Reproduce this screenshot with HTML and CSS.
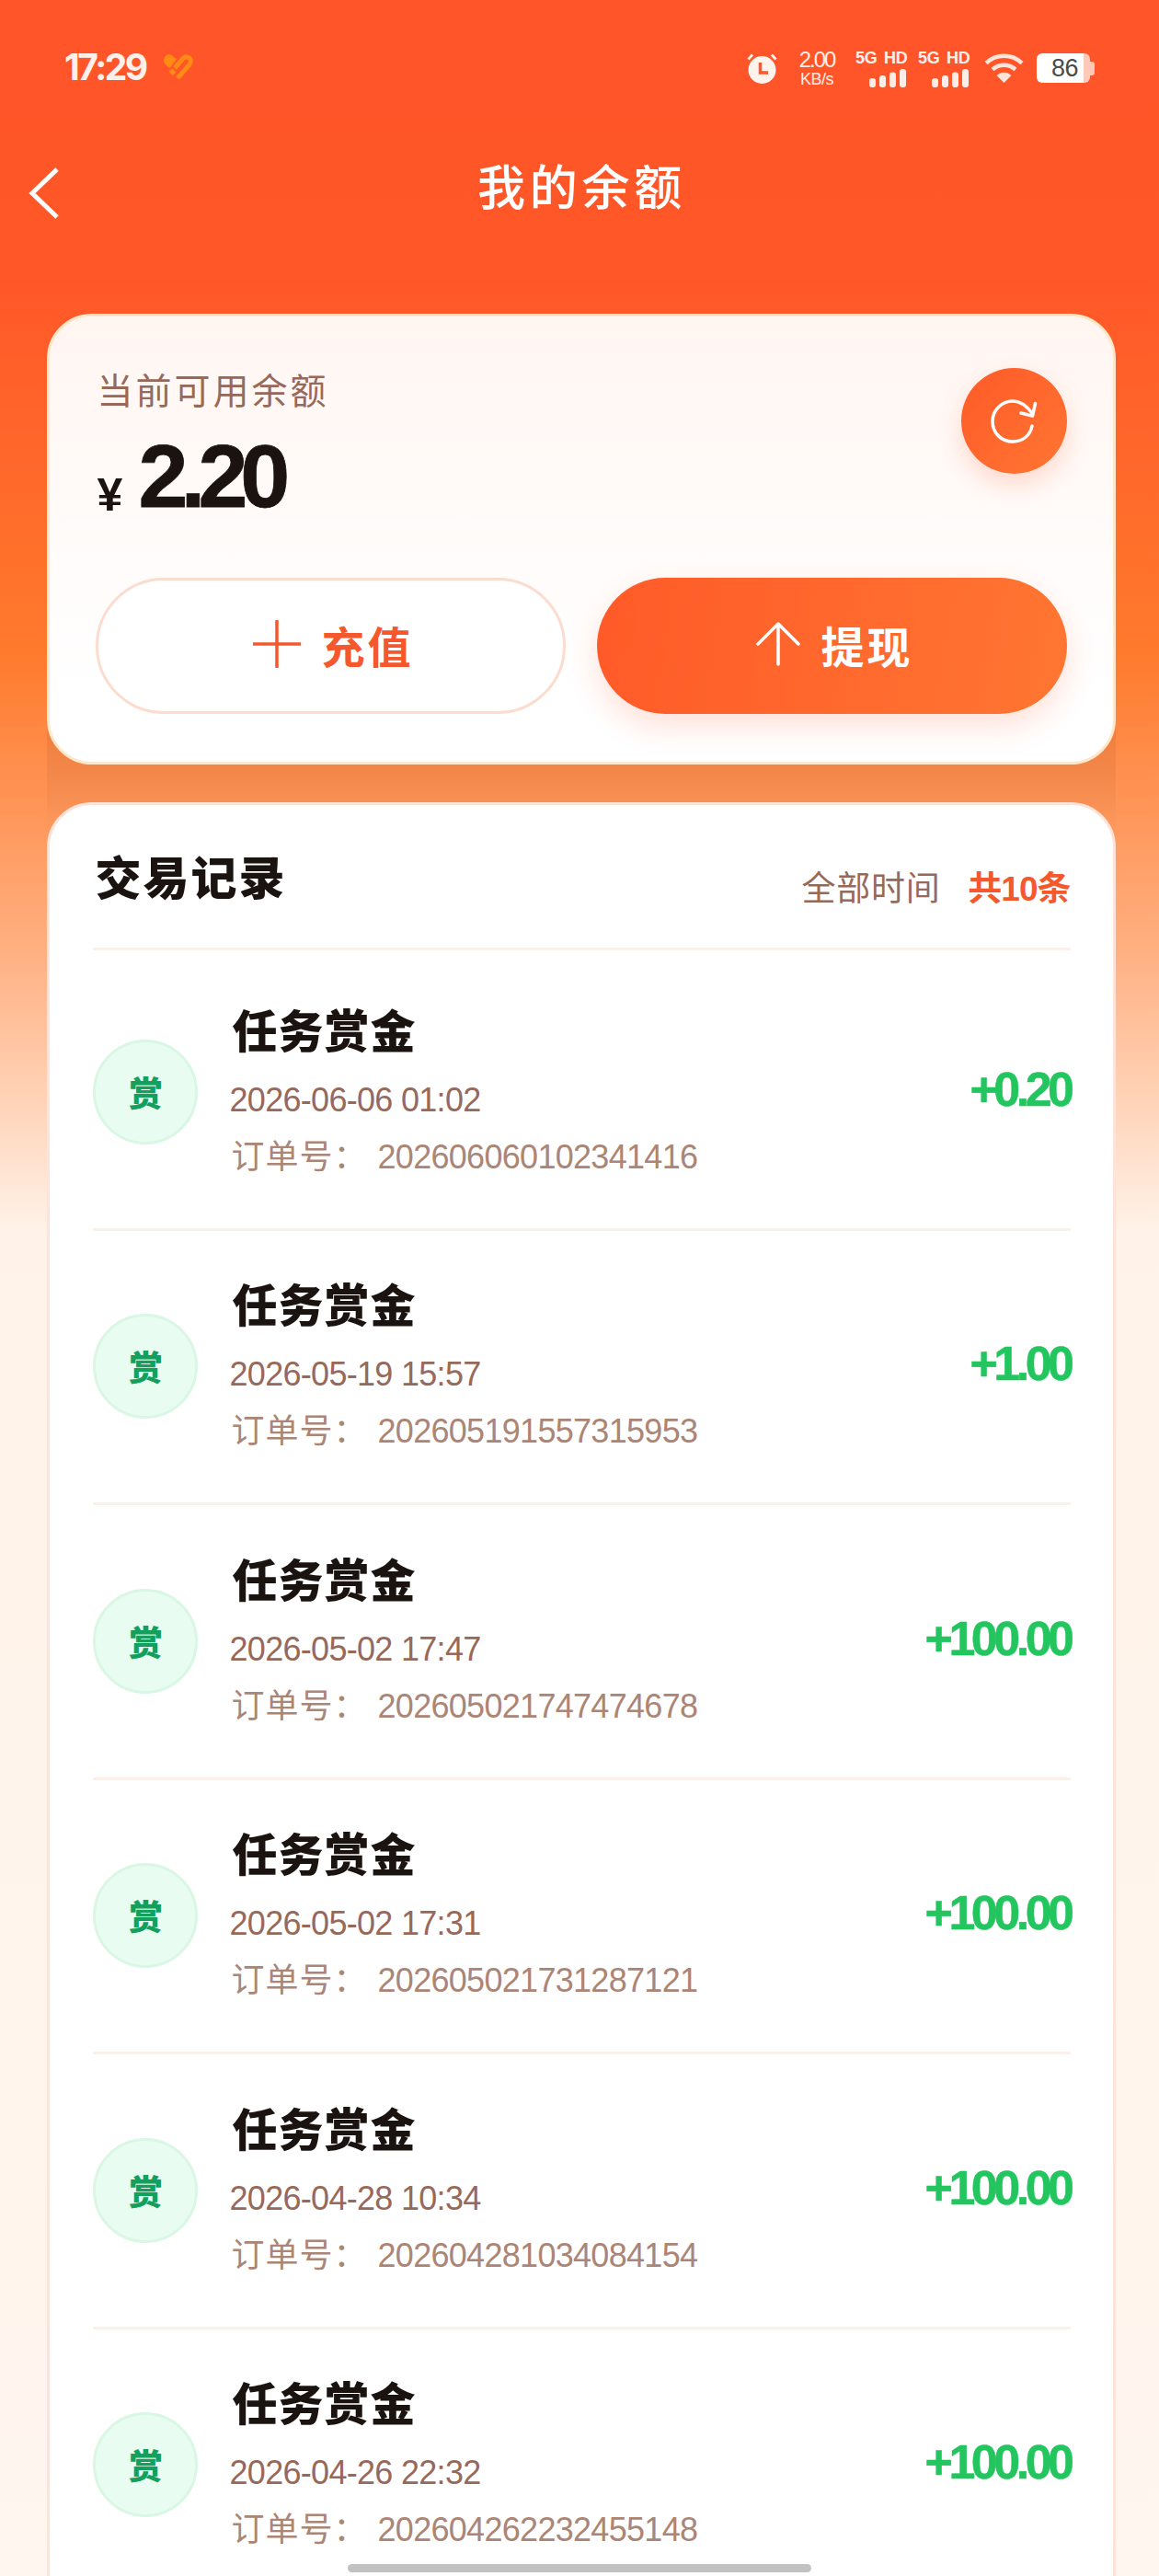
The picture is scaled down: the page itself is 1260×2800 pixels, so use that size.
FILE: index.html
```html
<!DOCTYPE html>
<html lang="zh-CN">
<head>
<meta charset="utf-8">
<title>我的余额</title>
<link rel="stylesheet" href="styles.css">
</head>
<body>
<div class="page">
  <div class="status">
    <div class="status-left">
      <span class="time">17:29</span>
      <svg class="heart" viewBox="0 0 34 28" aria-hidden="true"><path d="M1 7.500C1 3 6 0 9.500 2L15 6.500L7.500 16C3.500 13 1 11 1 7.500Z" fill="#ff8a14"/><path d="M13 16L22 5.500C25 2.500 29.500 4 30.500 7.500C31 10 29 12 27.500 14L16 27" fill="none" stroke="#ff8a14" stroke-width="5"/><path d="M8.500 18L12.500 22.500" stroke="#ff8a14" stroke-width="5" fill="none"/></svg>
    </div>
    <div class="status-right">
      <svg class="alarm" viewBox="0 0 35 34" aria-hidden="true"><circle cx="17.500" cy="19" r="15" fill="#fff3ee"/><path d="M1.500 6.500L6 1.500L8 3.500L3.500 8.500ZM33.500 6.500L29 1.500L27 3.500L31.500 8.500Z" fill="#fff3ee"/><path d="M15.500 11V22H24" fill="none" stroke="#ff5528" stroke-width="3.500"/></svg>
      <div class="speed"><span class="speed-num">2.00</span><span class="speed-unit">KB/s</span></div>
      <div class="sig"><span class="sig-text">5G HD</span><svg class="bars" viewBox="0 0 41 20" aria-hidden="true"><rect x="0" y="10" width="7" height="10" rx="3"/><rect x="11" y="7" width="7" height="13" rx="3"/><rect x="22" y="3.500" width="7" height="16.500" rx="3"/><rect x="33" y="0" width="7" height="20" rx="3"/></svg></div>
      <div class="sig"><span class="sig-text">5G HD</span><svg class="bars" viewBox="0 0 41 20" aria-hidden="true"><rect x="0" y="10" width="7" height="10" rx="3"/><rect x="11" y="7" width="7" height="13" rx="3"/><rect x="22" y="3.500" width="7" height="16.500" rx="3"/><rect x="33" y="0" width="7" height="20" rx="3"/></svg></div>
      <svg class="wifi" viewBox="0 0 43 34" aria-hidden="true"><g fill="none" stroke="#ffe4da" stroke-width="4.500"><path d="M2 11.500C13 1 30 1 41 11.500"/><path d="M9 18.500C16 12 27 12 34 18.500"/></g><path d="M21.500 33L13.500 25C18 20.500 25 20.500 29.500 25Z" fill="#ffe4da"/></svg>
      <div class="battery"><span class="battery-body"><span class="battery-num">86</span></span><span class="battery-cap"></span></div>
    </div>
  </div>

  <div class="nav">
    <svg class="back" viewBox="0 0 34 58" aria-hidden="true"><path d="M31 3L4 29L31 55" fill="none" stroke="#fff" stroke-width="5"/></svg>
    <h1 class="nav-title">我的余额</h1>
  </div>

  <div class="cards">
    <section class="card balance">
      <div class="balance-top">
        <div>
          <div class="balance-label">当前可用余额</div>
          <div class="balance-amount"><span class="yen">¥</span><span class="amount-num">2.20</span></div>
        </div>
        <div class="refresh">
          <svg viewBox="0 0 54 52" aria-hidden="true"><path d="M47 31C45 41 37 48 26 48C14 48 4 39 4 26C4 14 14 4 26 4C35 4 41 9 47 17" fill="none" stroke="#fff" stroke-width="3.500" stroke-linecap="round"/><path d="M50.500 6.500L47.500 20L35 17" fill="none" stroke="#fff" stroke-width="3.500" stroke-linecap="round" stroke-linejoin="round"/></svg>
        </div>
      </div>
      <div class="actions">
        <button class="btn btn-light"><svg class="btn-ico" viewBox="0 0 52 52" aria-hidden="true"><path d="M26 1V51M1 26H51" stroke="#f4582c" stroke-width="3.500" stroke-linecap="round" fill="none"/></svg>充值</button>
        <button class="btn btn-solid"><svg class="btn-ico" viewBox="0 0 48 48" aria-hidden="true"><path d="M24 46V2M2 24L24 2L46 24" stroke="#fff" stroke-width="3.500" stroke-linecap="round" stroke-linejoin="round" fill="none"/></svg>提现</button>
      </div>
    </section>

    <section class="card records">
      <div class="rec-head">
        <h2 class="rec-title">交易记录</h2>
        <div class="rec-meta"><span class="rec-range">全部时间</span><span class="rec-count">共10条</span></div>
      </div>
      <div class="list">
        <div class="row"><div class="avatar">赏</div><div class="info"><div class="name">任务赏金</div><div class="date">2026-06-06 01:02</div><div class="order">订单号： <span class="order-no">202606060102341416</span></div></div><div class="amt">+0.20</div></div>
        <div class="row"><div class="avatar">赏</div><div class="info"><div class="name">任务赏金</div><div class="date">2026-05-19 15:57</div><div class="order">订单号： <span class="order-no">202605191557315953</span></div></div><div class="amt">+1.00</div></div>
        <div class="row"><div class="avatar">赏</div><div class="info"><div class="name">任务赏金</div><div class="date">2026-05-02 17:47</div><div class="order">订单号： <span class="order-no">202605021747474678</span></div></div><div class="amt">+100.00</div></div>
        <div class="row"><div class="avatar">赏</div><div class="info"><div class="name">任务赏金</div><div class="date">2026-05-02 17:31</div><div class="order">订单号： <span class="order-no">202605021731287121</span></div></div><div class="amt">+100.00</div></div>
        <div class="row"><div class="avatar">赏</div><div class="info"><div class="name">任务赏金</div><div class="date">2026-04-28 10:34</div><div class="order">订单号： <span class="order-no">202604281034084154</span></div></div><div class="amt">+100.00</div></div>
        <div class="row"><div class="avatar">赏</div><div class="info"><div class="name">任务赏金</div><div class="date">2026-04-26 22:32</div><div class="order">订单号： <span class="order-no">202604262232455148</span></div></div><div class="amt">+100.00</div></div>
      </div>
    </section>
  </div>
  <div class="home-bar"></div>
</div>
</body>
</html>
```
FILE: styles.css
```css
* { box-sizing: border-box; }
html, body { margin: 0; padding: 0; }
body { width: 1260px; height: 2800px; overflow: hidden; font-family: "Liberation Sans", "Noto Sans CJK SC", sans-serif; }
.page {
  position: relative;
  width: 1260px;
  height: 2800px;
  overflow: hidden;
  background: linear-gradient(180deg, #ff5528 0, #ff5728 300px, #ff7a2d 710px, #ffb183 1040px, #fff3e9 1340px, #fff6ef 2800px);
}
.status { height: 148px; display: flex; justify-content: space-between; align-items: center; padding: 0 70px; }
.status-left { display: flex; align-items: center; gap: 18px; padding-bottom: 4px; }
.time { font-family: Inter, sans-serif; font-size: 39px; font-weight: 700; color: #fff1ea; letter-spacing: -2.5px; line-height: 1; }
.heart { width: 34px; height: 28px; display: block; }
.status-right { display: flex; align-items: center; }
.alarm { width: 35px; height: 34px; display: block; margin-right: 22px; }
.speed { width: 40px; margin-right: 22px; display: flex; flex-direction: column; align-items: center; color: #ffeee7; }
.speed-num { font-size: 24px; line-height: 24px; letter-spacing: -2px; }
.speed-unit { font-size: 18px; line-height: 18px; letter-spacing: -.5px; }
.sig { width: 57px; margin-right: 11px; display: flex; flex-direction: column; align-items: flex-end; color: #fff1ea; }
.sig + .wifi { margin-left: 4px; }
.sig-text { width: 57px; font-size: 18px; font-weight: 700; line-height: 20px; white-space: nowrap; letter-spacing: -.3px; word-spacing: 3px; }
.bars { width: 41px; height: 20px; display: block; fill: #ffeee7; margin: 2px 1px 0 0; }
.wifi { width: 43px; height: 34px; display: block; margin-right: 14px; }
.battery { display: flex; align-items: center; }
.battery-body { width: 58px; height: 32px; border-radius: 6px; display: flex; align-items: center; padding-left: 16px; background: linear-gradient(90deg, #fff 0 51px, #ffc9b8 51px); }
.battery-num { font-size: 27px; color: #4a4a4a; line-height: 1; letter-spacing: -.5px; }
.battery-cap { width: 5px; height: 15px; background: #ffc9b8; border-radius: 0 3px 3px 0; }

.nav { height: 110px; position: relative; display: flex; align-items: center; justify-content: center; padding: 0 0 4px 5px; }
.back { position: absolute; left: 31px; top: 33px; width: 34px; height: 58px; }
.nav-title { margin: 0; font-size: 52px; font-weight: 500; color: #fff; letter-spacing: 4.7px; line-height: 70px; font-family: "Noto Sans CJK SC", sans-serif; }

.cards { position: relative; margin-top: 83px; padding: 0 47px 0 51px; }
.cards::before { content: ""; position: absolute; left: 51px; right: 47px; top: 440px; height: 130px; background: linear-gradient(180deg, rgba(150, 75, 40, .16), rgba(150, 75, 40, .11) 50%, rgba(150, 75, 40, 0)); }
.card { position: relative; border: 3.5px solid #ffe3d8; border-radius: 49px; }
.balance { height: 490px; padding: 53px 50.5px 0 49.5px; border-color: #ffe7c9; background: linear-gradient(180deg, #fff6f2, #fff 85%); }
.balance-top { height: 231px; display: flex; justify-content: space-between; align-items: flex-start; }
.balance-top .refresh { margin-top: 3px; }
.balance-label { font-size: 39px; line-height: 50px; color: #96695a; letter-spacing: 3px; padding-left: 2px; font-family: "Noto Sans CJK SC", sans-serif; }
.balance-amount { margin-top: 21px; color: #1a1310; font-weight: 700; line-height: 100px; white-space: nowrap; }
.yen { display: inline-block; font-size: 50px; line-height: 1; width: 47px; padding-left: 2px; vertical-align: -4px; }
.amount-num { font-size: 97px; letter-spacing: -8px; -webkit-text-stroke: .8px #1a1310; }
.refresh { width: 115px; height: 115px; border-radius: 50%; background: linear-gradient(135deg, #ff5a28, #ff7632); box-shadow: 0 12px 28px rgba(255, 90, 40, .2); display: flex; align-items: center; justify-content: center; }
.refresh svg { width: 54px; height: 52px; display: block; }
.actions { display: grid; grid-template-columns: 1fr 1fr; gap: 34px; }
.btn { height: 148px; border-radius: 74px; border: 3.5px solid #fbdccf; background: #fff; display: flex; align-items: center; justify-content: center; gap: 23px; font-family: "Noto Sans CJK SC", sans-serif; font-size: 47px; font-weight: 700; letter-spacing: 3px; color: #f4582c; padding: 0 0 4px 6px; }
.btn-ico { width: 52px; height: 52px; display: block; }
.btn-solid { border: 0; color: #fff; background: linear-gradient(100deg, #ff5a28, #ff7632); box-shadow: 0 14px 32px rgba(255, 90, 40, .18); }
.btn-solid .btn-ico { width: 48px; height: 48px; }

.records { margin-top: 41px; background: #fff; padding: 0 46.5px; height: 2200px; }
.rec-head { height: 157.5px; border-bottom: 3px solid #fdf0ea; display: flex; justify-content: space-between; align-items: flex-start; }
.rec-title { margin: 41px 0 0; font-size: 50px; line-height: 70px; font-weight: 900; letter-spacing: 2px; color: #1a1310; padding-left: 3px; font-family: "Noto Sans CJK SC", sans-serif; }
.rec-meta { display: flex; gap: 30px; font-size: 37px; line-height: 50px; margin-top: 67px; }
.rec-range { color: #96695a; letter-spacing: .7px; }
.rec-count { color: #f4582c; font-weight: 700; letter-spacing: -1px; }
.list { padding-top: 6px; }
.row { height: 298.5px; border-bottom: 3px solid #fdf0ea; display: flex; align-items: center; }
.list .row:first-child { height: 299px; }
.avatar { width: 114px; height: 114px; flex: none; border: 3.5px solid #d9f7e4; background: #e9fcf1; border-radius: 50%; display: flex; align-items: center; justify-content: center; font-size: 37px; font-weight: 900; color: #12a05c; padding-left: 2px; font-family: "Noto Sans CJK SC", sans-serif; }
.info { margin: -8px 0 0 35px; }
.name { font-size: 49px; line-height: 70px; font-weight: 900; color: #1a1310; letter-spacing: 1px; padding-left: 3px; font-family: "Noto Sans CJK SC", sans-serif; }
.date { font-size: 36px; line-height: 50px; margin-top: 18px; color: #96695a; letter-spacing: -.7px; }
.order { font-size: 36px; line-height: 50px; margin-top: 12px; color: #ab8575; letter-spacing: 1px; padding-left: 2px; }
.order-no { letter-spacing: -.7px; }
.amt { margin-left: auto; font-size: 52px; line-height: 70px; font-weight: 700; color: #22c55e; letter-spacing: -4.5px; -webkit-text-stroke: .5px #22c55e; margin-top: -6px; }
.home-bar { position: absolute; left: 378px; bottom: 4px; width: 504px; height: 9px; border-radius: 5px; background: #c2c2c2; }
```
